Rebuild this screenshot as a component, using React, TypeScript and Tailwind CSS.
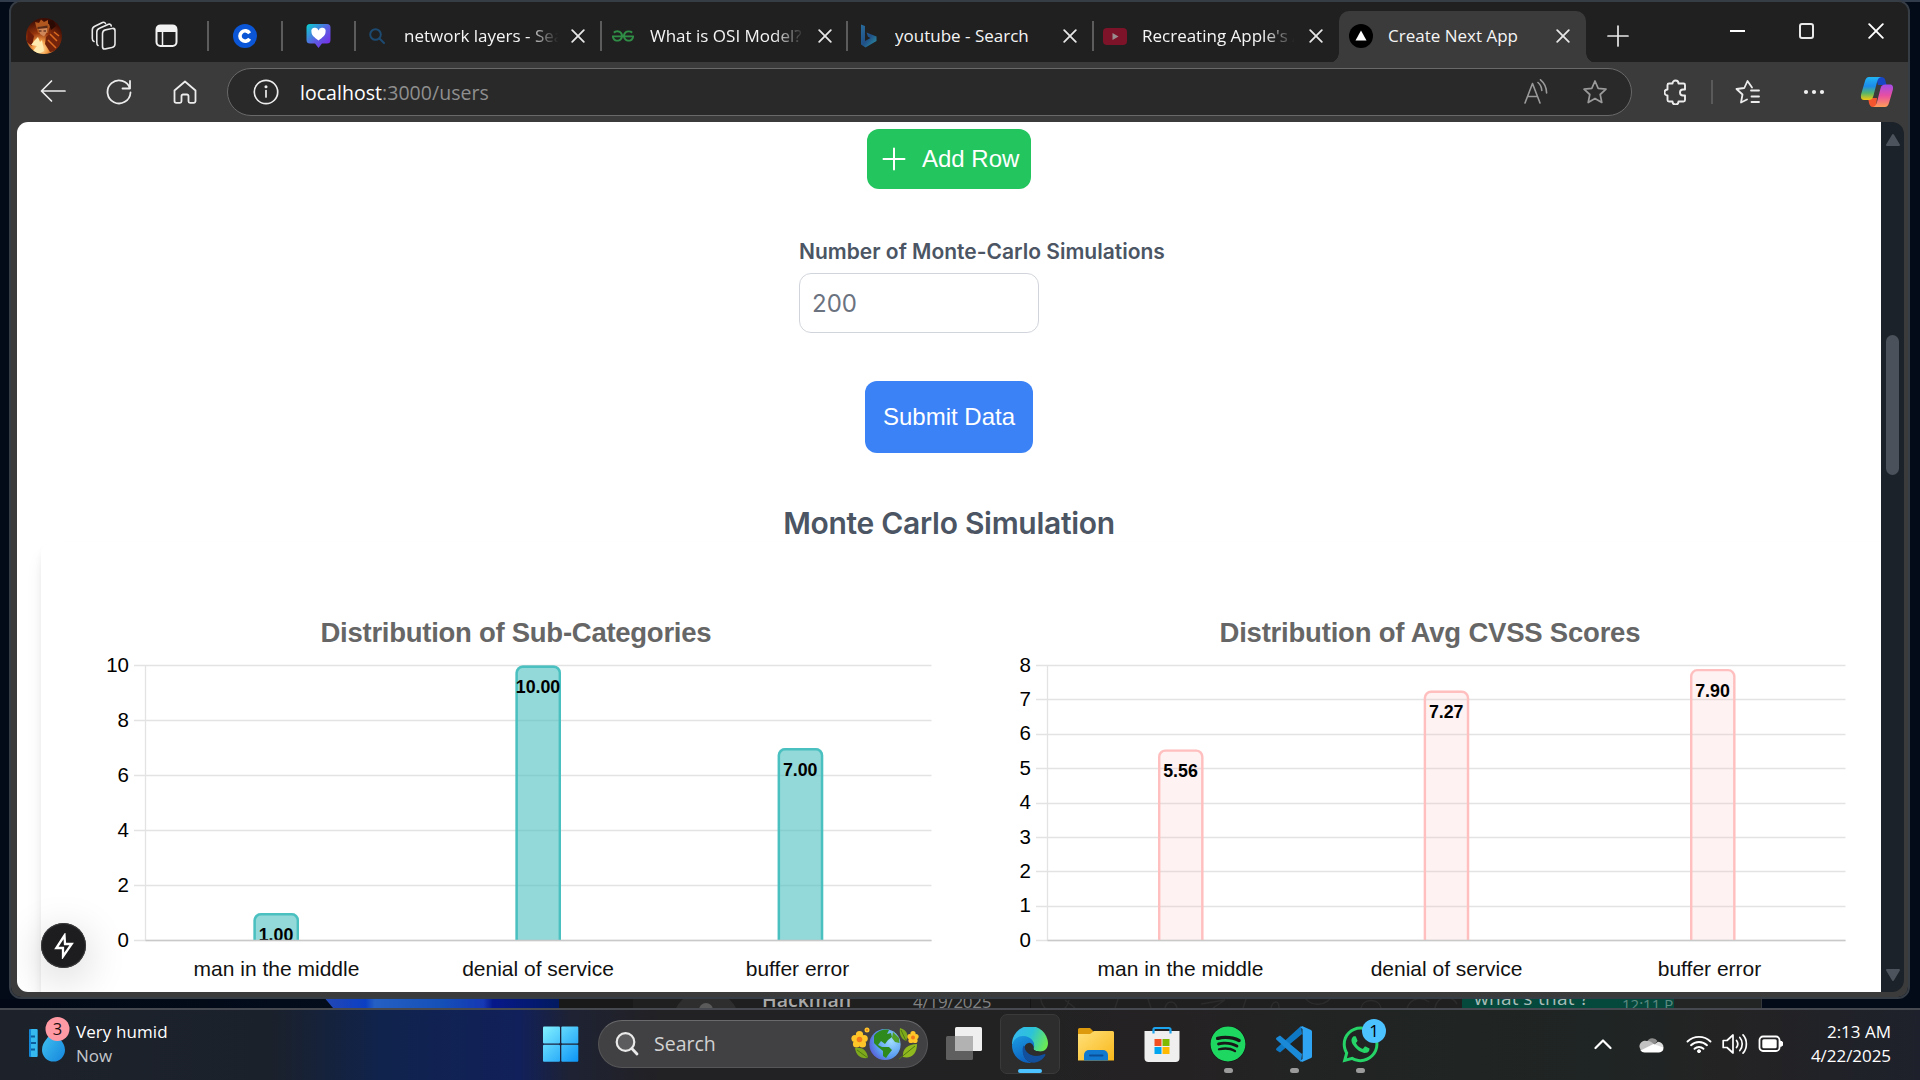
import React from "react";
import { FaSpotify, FaWhatsapp } from "react-icons/fa";
import { SiGeeksforgeeks } from "react-icons/si";

const segoe = "font-['Open_Sans','Noto_Sans',sans-serif]";

/* ---------- small shared pieces ---------- */

function Stroke({ w, h, box, sw = 1.6, className = "", children }: { w: number; h: number; box?: string; sw?: number; className?: string; children: React.ReactNode }) {
  return (
    <svg width={w} height={h} viewBox={box ?? `0 0 ${w} ${h}`} fill="none" stroke="currentColor" strokeWidth={sw} strokeLinecap="round" strokeLinejoin="round" className={`shrink-0 ${className}`}>
      {children}
    </svg>
  );
}

function TabClose() {
  return (
    <Stroke w={14} h={14} sw={1.8} className="text-[#e6e6e6]">
      <path d="M1.2 1.2L12.8 12.8M12.8 1.2L1.2 12.8" />
    </Stroke>
  );
}

function Divider() {
  return <div className="h-[30px] w-[2px] shrink-0 bg-[#5c5c5c]" />;
}

/* ---------- tab strip ---------- */

function Avatar() {
  return (
    <svg width="36" height="36" viewBox="0 0 36 36" className="shrink-0">
      <defs>
        <clipPath id="av"><circle cx="18" cy="18" r="18" /></clipPath>
        <radialGradient id="avg" cx=".4" cy=".85" r=".8">
          <stop offset="0" stopColor="#fff0c0" />
          <stop offset=".25" stopColor="#f5a04a" />
          <stop offset=".55" stopColor="#98350d" />
          <stop offset="1" stopColor="#3d0d04" />
        </radialGradient>
      </defs>
      <g clipPath="url(#av)">
        <rect width="36" height="36" fill="url(#avg)" />
        <path d="M10 8L9 4L13 5L15 1.500L18 4L22 2L22 6L25 6L23 11L22 15H12Z" fill="#b0561f" />
        <path d="M12 9L21 8V14L18 18.500L14 16Z" fill="#cf8658" />
        <path d="M11.500 9L21.500 7.500V10L11.500 11Z" fill="#5a2a16" />
        <path d="M13 13H15.500M17.500 13H20" stroke="#3a1208" strokeWidth="1.200" />
        <path d="M20 19L27 13L33 20L35 32L24 34L19 26Z" fill="#74240a" />
        <path d="M24 16L31 23M22 22L30 30M28 14L33 18" stroke="#d9691f" strokeWidth="1.600" />
        <path d="M2 12L8 18L6 28L1 24Z" fill="#6b1b07" />
        <path d="M22 3L27 2L30 8L25 12Z" fill="#2b0a04" />
        <path d="M9 22L12 19L14 24L16 22L18 33L12 36L7 33L11 28L5 27Z" fill="#ffeab0" />
      </g>
    </svg>
  );
}

function Tab({ icon, title, width, iconW, textW, fade }: { icon: React.ReactNode; title: string; width: string; iconW: string; textW: string; fade?: boolean }) {
  return (
    <div className={`flex h-[30px] shrink-0 items-center ${width}`}>
      <div className={`flex shrink-0 items-center ${iconW}`}>{icon}</div>
      <div className={`shrink-0 overflow-hidden whitespace-nowrap text-[17px] text-[#f5f5f5] ${textW} ${fade ? "[mask-image:linear-gradient(90deg,#000_79%,transparent_99%)]" : ""}`}>{title}</div>
      <TabClose />
    </div>
  );
}

function TabStrip() {
  return (
    <div className="flex h-[60px] shrink-0 bg-[#202020] pl-[16px]">
      <div className="flex h-[68px] w-full items-center">
        <Avatar />
        <Stroke w={26} h={30} className="ml-[29px] text-[#e8e8e8]">
          <rect x="11.500" y="8.500" width="12.500" height="19" rx="3" transform="skewY(-12) translate(0 3.500)" />
          <path d="M7 24.500C5.800 24 5.800 23 5.800 21.500V11C5.800 9 7 7.800 8.500 7.200L17.500 3.300C19 2.800 20 3.500 20.300 5M3 20.500C1.500 20 1.300 19 1.300 17.500V9C1.300 7 2.300 6 3.800 5.300L11.500 1.500C13 1 14 1.500 14.500 2.500" />
        </Stroke>
        <Stroke w={24} h={24} sw={2} className="ml-[38px] text-[#f2f2f2]">
          <rect x="1.500" y="1.500" width="20" height="20.500" rx="4" />
          <path d="M2 7V5a3 3 0 0 1 3-3h13a3 3 0 0 1 3 3v2z" fill="currentColor" />
          <path d="M7.500 8v14" strokeWidth="1.500" />
        </Stroke>
        <div className="ml-[28px]"><Divider /></div>
        <svg width="24" height="24" viewBox="0 0 24 24" className="ml-[24px] shrink-0">
          <circle cx="12" cy="12" r="12" fill="#0a56d6" />
          <path d="M16.600 9.300A5.200 5.200 0 1 0 16.600 14.700" fill="none" stroke="#fff" strokeWidth="3.600" />
        </svg>
        <div className="ml-[24px]"><Divider /></div>
        <svg width="25" height="26" viewBox="0 0 25 26" className="ml-[23px] shrink-0">
          <defs>
            <linearGradient id="hp" x1="0" y1="0" x2="1" y2="1">
              <stop offset="0" stopColor="#06d3cf" /><stop offset=".5" stopColor="#5a62e2" /><stop offset="1" stopColor="#7d1fe8" />
            </linearGradient>
          </defs>
          <path d="M4 1H21a3.500 3.500 0 0 1 3.500 3.500V17a3.500 3.500 0 0 1-3.500 3.500H16L12.500 25L9 20.500H4A3.500 3.500 0 0 1 .5 17V4.500A3.500 3.500 0 0 1 4 1Z" fill="url(#hp)" />
          <path d="M12.500 17.500C8 14 5.500 12 5.500 9.200A3.600 3.600 0 0 1 12.500 7.500A3.600 3.600 0 0 1 19.500 9.200C19.500 12 17 14 12.500 17.500Z" fill="#fff" />
        </svg>
        <div className="ml-[23px]"><Divider /></div>
        <Tab
          width="ml-[13px] w-[231px]" iconW="w-[35px]" textW="mr-[11px] w-[156px]" title="network layers - Search" fade
          icon={<Stroke w={16} h={16} sw={2} className="text-[#1c4a70]"><circle cx="6.500" cy="6.500" r="5.300" /><path d="M10.500 10.500L15 15" /></Stroke>}
        />
        <Divider />
        <Tab
          width="ml-[10px] w-[234px]" iconW="w-[38px]" textW="mr-[12px] w-[156px]" title="What is OSI Model? - Layers" fade
          icon={<SiGeeksforgeeks className="h-[22px] w-[22px] text-[#2f8d46]" />}
        />
        <Divider />
        <Tab
          width="ml-[12px] w-[232px]" iconW="w-[35px]" textW="mr-[13px] w-[155px]" title="youtube - Search"
          icon={
            <svg width="18" height="24" viewBox="0 0 18 24">
              <defs><linearGradient id="bg" x1="0" y1="0" x2=".8" y2="1"><stop offset="0" stopColor="#2a6c9c" /><stop offset=".6" stopColor="#1f4f86" /><stop offset="1" stopColor="#2c8aa0" /></linearGradient></defs>
              <path d="M1 0.500L5 2V17L10.500 14L8 12.800L6.500 8.500L16.500 12.500V17L5.500 23.500L1 20.500Z" fill="url(#bg)" />
            </svg>
          }
        />
        <Divider />
        <Tab
          width="ml-[9px] w-[236px]" iconW="w-[39px]" textW="mr-[13px] w-[154px]" title="Recreating Apple's Animation" fade
          icon={<svg width="24" height="17" viewBox="0 0 24 17"><rect width="24" height="17" rx="4" fill="#7d1329" /><path d="M9.500 5V12L15.500 8.500Z" fill="#9a8d90" /></svg>}
        />
        <div className="relative mt-[2px] flex h-[52px] w-[247px] shrink-0 items-center rounded-t-[10px] bg-[#3b3b3b] pl-[10px]">
          <div className="absolute -left-[10px] bottom-0 h-[10px] w-[10px] bg-[radial-gradient(circle_at_0_0,transparent_9.500px,#3b3b3b_10px)]" />
          <div className="absolute -right-[10px] bottom-0 h-[10px] w-[10px] bg-[radial-gradient(circle_at_100%_0,transparent_9.500px,#3b3b3b_10px)]" />
          <Tab
            width="w-[230px] -mt-[2px]" iconW="w-[39px]" textW="mr-[11px] w-[157px]" title="Create Next App"
            icon={<svg width="24" height="24" viewBox="0 0 24 24"><circle cx="12" cy="12" r="12" fill="#000" /><path d="M12 6.500L17.500 16.500H6.500Z" fill="#fff" /></svg>}
          />
        </div>
        <Stroke w={22} h={22} sw={1.700} className="ml-[21px] text-[#e8e8e8]"><path d="M11 1V21M1 11H21" /></Stroke>
        <div className="-mt-[10px] flex items-center text-white">
          <div className="ml-[101px] h-[2px] w-[15px] bg-white" />
          <div className="ml-[54px] h-[16px] w-[15px] rounded-[3px] border-2 border-[#e8e8e8]" />
          <Stroke w={16} h={16} sw={1.900} className="ml-[54px]"><path d="M1.200 1.200L14.800 14.800M14.800 1.200L1.200 14.800" /></Stroke>
        </div>
      </div>
    </div>
  );
}

/* ---------- toolbar ---------- */

function Copilot() {
  return (
    <svg width="34" height="32" viewBox="0 0 34 32" className="shrink-0">
      <defs>
        <linearGradient id="cpA" x1="0" y1="0" x2="0" y2="1"><stop offset="0" stopColor="#22b4f4" /><stop offset=".4" stopColor="#1c8bea" /><stop offset=".7" stopColor="#57b56a" /><stop offset="1" stopColor="#f6c90e" /></linearGradient>
        <linearGradient id="cpB" x1="0" y1="0" x2="0" y2="1"><stop offset="0" stopColor="#a34be8" /><stop offset=".5" stopColor="#e84fa0" /><stop offset="1" stopColor="#ff9d57" /></linearGradient>
      </defs>
      <path d="M16 1H21C24 1 25 3 25.500 5L26.500 9H18Z" fill="#1747c4" />
      <path d="M8 22H17L16 31H13C10.500 31 9.500 29 9 27Z" fill="#f4552f" />
      <path d="M9 1H21C18.500 1.500 17.800 3.500 17 6L13.500 19.500C12.800 22.500 11.500 24 8.500 24H4C1 24 .5 21 1.200 18L5 5C5.800 2.500 7 1 9 1Z" fill="url(#cpA)" />
      <path d="M25 31H13C15.500 30.500 16.200 28.500 17 26L20.500 12.500C21.200 9.500 22.500 8.500 25.500 8.500H30C33 8.500 33.500 11 32.800 14L29 27C28.200 29.500 27 31 25 31Z" fill="url(#cpB)" />
    </svg>
  );
}

function Toolbar() {
  return (
    <div className="flex h-[60px] shrink-0 items-center bg-[#3b3b3b] pl-[30px] text-[#ececec]">
      <Stroke w={26} h={24} sw={1.700} className="-mt-[2px]"><path d="M25 12H2M11.500 2L1.500 12L11.500 22" /></Stroke>
      <Stroke w={26} h={26} sw={1.800} className="ml-[40px]"><path d="M24 9.500A11.500 11.500 0 1 0 24.500 13.500M24 2V9.500H16.500" /></Stroke>
      <Stroke w={24} h={24} sw={1.800} className="ml-[41px]"><path d="M1.500 10.500L12 1.500L22.500 10.500V21A1.800 1.800 0 0 1 20.700 22.800H17A1.500 1.500 0 0 1 15.500 21.300V16A1.500 1.500 0 0 0 14 14.500H10A1.500 1.500 0 0 0 8.500 16V21.300A1.500 1.500 0 0 1 7 22.800H3.300A1.800 1.800 0 0 1 1.500 21Z" /></Stroke>
      <div className="ml-[30px] flex h-[48px] w-[1405px] shrink-0 items-center rounded-full border-[1.500px] border-[#696969] bg-[#292929] pl-[25px] pr-[22px]">
        <Stroke w={26} h={26} sw={1.700}><circle cx="13" cy="13" r="11.700" /><path d="M13 11.500V18" /><circle cx="13" cy="7.700" r=".7" fill="currentColor" /></Stroke>
        <div className="ml-[21px] mt-[1px] flex-1 text-[19.500px] tracking-[0.04px] text-[#8f8f8f]"><span className="text-white">localhost</span>:3000/users</div>
        <Stroke w={26} h={26} sw={1.600} className="text-[#9a9a9a]"><path d="M2 24L9.500 4.500L17 24M4.500 17.500H14.500M15 3.500C17.500 5.500 18.600 8 18.800 11.500M17.500 .8C21.500 4 23.500 8 23.600 14" /></Stroke>
        <Stroke w={26} h={26} sw={1.700} className="ml-[33px] mr-px text-[#9a9a9a]"><path d="M13 2L16.200 9.300L24 10.200L18.200 15.500L19.800 23.500L13 19.500L6.200 23.500L7.800 15.500L2 10.200L9.800 9.300Z" /></Stroke>
      </div>
      <Stroke w={24} h={26} sw={1.900} className="ml-[32px]"><path d="M8.500 4.500a3 3 0 0 1 6 0H19.500A1.500 1.500 0 0 1 21 6V10.500H19a2.800 2.800 0 0 0 0 6h2V21a1.500 1.500 0 0 1-1.500 1.500H14.500a3 3 0 0 1-6 0H5A1.500 1.500 0 0 1 3.500 21V16.500a3 3 0 0 1 0-6V6A1.500 1.500 0 0 1 5 4.500Z" /></Stroke>
      <div className="ml-[23px] h-[24px] w-[2px] bg-[#5a5a5a]" />
      <Stroke w={26} h={26} sw={1.800} className="ml-[22px]"><path d="M17 8.500L12.500 2L9.300 9L1.500 10L7.500 15.500L6 23.500L12 20.500M16 11.500H24M16.500 17.500H24M16.500 23H24" /></Stroke>
      <svg width="22" height="6" viewBox="0 0 22 6" className="ml-[42px] shrink-0"><g fill="#f0f0f0"><circle cx="3" cy="3" r="2.100" /><circle cx="11" cy="3" r="2.100" /><circle cx="19" cy="3" r="2.100" /></g></svg>
      <div className="ml-[35px]"><Copilot /></div>
    </div>
  );
}

/* ---------- charts ---------- */

type Bar = { label: string; value: number; lx: number };

function BarChart({ title, width, axisX, gridX, right, max, step, bars, fill, line, barX, titleX, titleW }: {
  title: string; width: number; axisX: number; gridX: number; right: number; max: number; step: number; bars: Bar[]; fill: string; line: string; barX: number[]; titleX: number; titleW: number;
}) {
  const top = 66.5;
  const bottom = 341.5;
  const y = (v: number) => bottom - (v / max) * (bottom - top);
  const ticks: number[] = [];
  for (let v = 0; v <= max; v += step) ticks.push(v);
  return (
    <svg width={width} height="393" viewBox={`0 0 ${width} 393`} className="shrink-0 font-['Liberation_Sans',Arial,sans-serif]">
      <text x={titleX} y="43" textLength={titleW} fontSize="27.500" fontWeight="700" fill="#666">{title}</text>
      {ticks.map((v) => (
        <g key={v}>
          <path d={`M${gridX} ${Math.round(y(v) - 0.5) + 0.5}H${right}`} stroke="#e3e3e3" strokeWidth="1.300" />
          <text x={gridX - 5} y={y(v) + 6.200} textAnchor="end" fontSize="20.500" fill="#000">{v}</text>
        </g>
      ))}
      <path d={`M${axisX} ${top}V${bottom}`} stroke="#e3e3e3" strokeWidth="1.300" />
      {bars.map((b, i) => {
        const x = barX[i];
        const t = y(b.value);
        return (
          <g key={b.label}>
            <path d={`M${x} ${bottom}V${t + 7}a7 7 0 0 1 7 -7H${x + 38.5}a7 7 0 0 1 7 7V${bottom}Z`} fill={fill} />
            <path d={`M${x + 1.2} ${bottom}V${t + 7.5}a6.300 6.300 0 0 1 6.300 -6.300H${x + 38}a6.300 6.300 0 0 1 6.300 6.300V${bottom}`} fill="none" stroke={line} strokeWidth="2.400" />
            <text x={x + 22.500} y={t + 27.700} textAnchor="middle" fontSize="17.800" fontWeight="700" fill="#000">{b.value.toFixed(2)}</text>
            <text x={b.lx} y="377" textAnchor="middle" fontSize="21" fill="#111">{b.label}</text>
          </g>
        );
      })}
      <path d={`M${axisX} ${bottom}H${right}`} stroke="#c9c9c9" strokeWidth="1.500" />
    </svg>
  );
}

/* ---------- page ---------- */

function Page() {
  return (
    <div className="relative flex h-full w-[1864px] shrink-0 flex-col items-center overflow-hidden rounded-l-[11px] bg-white font-['Inter',sans-serif]">
      <button className="mt-[7px] flex h-[60px] w-[164px] shrink-0 items-center rounded-xl bg-[#22c55e] pl-[15px] font-['Liberation_Sans',Arial,sans-serif] text-[24px] text-white">
        <Stroke w={24} h={24} sw={2} className="mr-[16px]"><path d="M12 1.500V22.500M1.500 12H22.500" /></Stroke>
        <span className="whitespace-nowrap">Add Row</span>
      </button>
      <div className="mt-[47px] flex w-[300px] shrink-0 flex-col">
        <label className="h-[32px] whitespace-nowrap text-[21px] font-semibold leading-[32px] text-[#4b5563]">Number of Monte-Carlo Simulations</label>
        <div className="mt-[5px] flex h-[60px] w-[240px] items-center rounded-xl border border-[#d1d5db] px-[12px] pt-[2px] text-[24px] text-[#6b7280]">200</div>
      </div>
      <button className="mt-[48px] h-[72px] w-[168px] shrink-0 whitespace-nowrap rounded-xl bg-[#3b82f6] font-['Liberation_Sans',Arial,sans-serif] text-[24px] text-white">Submit Data</button>
      <h2 className="mt-[50px] h-[39px] shrink-0 text-[30px] font-semibold leading-[40px] tracking-[-0.300px] text-[#4b5563]">Monte Carlo Simulation</h2>
      <div className="flex h-[520px] w-full shrink-0 pl-[24px]">
        <div className="flex h-full w-[1860px] shrink-0 rounded-xl bg-white pt-[57px] shadow-[0_12px_19px_-4px_rgba(0,0,0,0.1),0_5px_8px_-2px_rgba(0,0,0,0.08)]">
          <BarChart
            title="Distribution of Sub-Categories" width={920} gridX={93} axisX={104.500} right={890.500} max={10} step={2}
            fill="rgba(75,192,192,0.6)" line="#4bc0c0" barX={[212.500, 474.500, 736.700]} titleX={279.500} titleW={391}
            bars={[{ label: "man in the middle", value: 1, lx: 235.500 }, { label: "denial of service", value: 10, lx: 497 }, { label: "buffer error", value: 7, lx: 756.500 }]}
          />
          <BarChart
            title="Distribution of Avg CVSS Scores" width={920} gridX={75} axisX={86.500} right={884.500} max={8} step={1}
            fill="rgba(255,190,190,0.2)" line="#ffbfbf" barX={[197, 462.700, 729]} titleX={258.500} titleW={421}
            bars={[{ label: "man in the middle", value: 5.56, lx: 219.500 }, { label: "denial of service", value: 7.27, lx: 485.500 }, { label: "buffer error", value: 7.9, lx: 748.500 }]}
          />
        </div>
      </div>
      <div className="absolute left-[24px] top-[801px] flex h-[45px] w-[45px] items-center justify-center rounded-full bg-[#1d1d1f] text-white shadow-[0_0_0_1px_#3a3a3c_inset,0_10px_44px_rgba(0,0,0,0.2)]">
        <Stroke w={20} h={26} sw={2.300}><path d="M10.500 2.500L2.300 15H9V23.500L17.700 11H11Z" strokeLinejoin="miter" /></Stroke>
      </div>
    </div>
  );
}

function Scrollbar() {
  return (
    <div className="flex w-[23px] shrink-0 flex-col items-center rounded-r-[12px] bg-[#1c2229]">
      <svg width="16" height="14" viewBox="0 0 16 14" className="mt-[11px]"><path d="M8 2L14 12H2Z" fill="#4d535c" stroke="#4d535c" strokeWidth="2" strokeLinejoin="round" /></svg>
      <div className="mt-[188px] h-[140px] w-[13px] rounded-full bg-[#4b515a]" />
      <svg width="16" height="14" viewBox="0 0 16 14" className="mb-[10px] mt-auto"><path d="M8 12L14 2H2Z" fill="#4d535c" stroke="#4d535c" strokeWidth="2" strokeLinejoin="round" /></svg>
    </div>
  );
}

/* ---------- desktop behind the browser ---------- */

function ChatWindow() {
  return (
    <div className="absolute left-[559px] top-[980px] flex h-[28px] w-[1203px] items-end overflow-hidden border-r border-[#34383a] bg-[#1f1f1f] text-[#a9a9a9]">
      <div className="relative flex h-full w-[472px] shrink-0 border-r border-[#151515]">
        <div className="h-full w-[74px] bg-[#191919]" />
        <div className="mt-[10px] h-[68px] w-[68px] translate-x-[39px] rounded-full bg-[#2e2e2e]">
          <div className="mx-auto mt-[13px] h-[14px] w-[14px] rounded-full bg-[#5a5a5a]" />
        </div>
        <span className="absolute left-[203px] top-[7px] text-[19.500px] font-semibold leading-[26px]">Hackman</span>
        <span className="absolute left-[354px] top-[10px] text-[17px] leading-[24px] tracking-[-0.250px] text-[#828282]">4/19/2025</span>
      </div>
      <svg width="431" height="28" viewBox="0 0 431 28" className="shrink-0" fill="none" stroke="#2b2b2b" strokeWidth="1.500">
        <path d="M10 16a14 14 0 0 0 28 4M34 20l10 8M84 28l4-12M120 28l-4-12M134 28c2-8 10-8 12 0M170 24l24-4-12 8M212 28l4-12M240 28c2-8 8-8 8 0M272 14c6 14 24 14 32-2M330 28c2-10 18-10 20 0M376 28c4-10 14-12 22-6M404 28c2-12 16-14 22-4" />
      </svg>
      <div className="relative h-full w-[212px] shrink-0 overflow-hidden bg-[#05493d]">
        <span className="absolute left-[12px] top-[5px] whitespace-nowrap text-[19px] leading-[26px] tracking-[0.300px] text-[#a8bdb8]">what's that ?</span>
        <span className="absolute left-[160px] top-[14px] whitespace-nowrap text-[15px] leading-[20px] text-[#5c8b82]">12:11 PM</span>
      </div>
      <div className="h-full flex-1 bg-[#222524]" />
    </div>
  );
}

/* ---------- taskbar ---------- */

function Pinned({ children, dot, active, badge }: { children: React.ReactNode; dot?: boolean; active?: boolean; badge?: string }) {
  return (
    <div className={`relative flex h-[60px] w-[60px] shrink-0 flex-col items-center rounded-[7px] pt-[12px] ${active ? "border border-[#3a3a3a] bg-[#2d2d2e] pt-[11px]" : ""}`}>
      <div className="flex h-[36px] w-[36px] items-center justify-center">{children}</div>
      {active && <div className="mt-[6px] h-[5px] w-[24px] rounded-full bg-[#4cc2ff]" />}
      {dot && <div className="mt-[6px] h-[5px] w-[9px] rounded-full bg-[#9b9b9b]" />}
      {badge && <div className="absolute right-[4px] top-[5px] flex h-[24px] w-[24px] items-center justify-center rounded-full bg-[#4cc2ff] text-[17px] text-black">{badge}</div>}
    </div>
  );
}

function EdgeIcon() {
  return (
    <svg width="36" height="36" viewBox="0 0 36 36">
      <defs>
        <linearGradient id="e1" x1="0" y1=".3" x2="1" y2=".6"><stop offset="0" stopColor="#35b8f0" /><stop offset=".5" stopColor="#2cc3d8" /><stop offset="1" stopColor="#6bea52" /></linearGradient>
        <linearGradient id="e2" x1="0" y1="0" x2=".4" y2="1"><stop offset="0" stopColor="#1b9de2" /><stop offset="1" stopColor="#0d62c0" /></linearGradient>
      </defs>
      <path d="M0 18A18 18 0 0 1 36 16C36 21 33 24.500 27.500 24.500C24 24.500 21 23 21.500 21.500C23 19 22 14 17 12C11 9.500 4 11 0 18Z" fill="url(#e1)" />
      <path d="M0 18C2 10 10 7 17 10.500C22 13 23 18 21.500 21C20 17.500 13 17 11.500 23C10.500 29 14 34 20 35.900C9 37 0 29 0 18Z" fill="url(#e2)" />
      <path d="M11.500 18.500C8.500 26 13 35 21 35.700C27 35.500 31.500 32 33.500 28C33.500 26.500 32 27 31 27.500C23 31 14 27.500 13.500 20Z" fill="#124f9c" />
      <path d="M21.500 21.500A4.500 4.500 0 1 0 13.200 22.500C14.500 25.500 18 28 22.500 28.500C25 28.600 28 28.200 30 27.500L27.500 24.500C24 24.500 21 23 21.500 21.500Z" fill="#2d2d2e" />
    </svg>
  );
}

function SearchArt() {
  return (
    <svg width="68" height="34" viewBox="0 0 68 34" className="shrink-0">
      <defs><radialGradient id="gl" cx=".7" cy=".4" r=".8"><stop offset="0" stopColor="#9fdcff" /><stop offset=".6" stopColor="#5a9df0" /><stop offset="1" stopColor="#5a4fd0" /></radialGradient></defs>
      <g fill="#ffc629">
        <circle cx="8.500" cy="7.500" r="3.600" /><circle cx="13.200" cy="11.500" r="3.600" /><circle cx="11.500" cy="17" r="3.600" /><circle cx="5.500" cy="17" r="3.600" /><circle cx="4" cy="11.500" r="3.600" />
        <circle cx="16" cy="3" r="2.500" />
        <circle cx="62" cy="6.500" r="2.600" /><circle cx="65" cy="9.500" r="2.600" /><circle cx="64" cy="13.500" r="2.600" /><circle cx="60" cy="13.500" r="2.600" /><circle cx="58.800" cy="9.500" r="2.600" />
      </g>
      <circle cx="8.500" cy="12.500" r="2.800" fill="#f07a1c" /><circle cx="16" cy="3" r="1" fill="#f07a1c" /><circle cx="62" cy="10.500" r="2" fill="#f07a1c" />
      <path d="M4 21C11 20 16 23 17 31C9 32 5 28 4 21Z" fill="#7fa91c" /><path d="M6 23L17 31" stroke="#4f7a10" />
      <path d="M49 1C56 3 58 8 55 14C50 12 48 7 49 1Z" fill="#7fa91c" /><path d="M50 3L55 14" stroke="#4f7a10" />
      <path d="M66 17C57 17 51 22 52 30C61 32 66 26 66 17Z" fill="#8fb91e" /><path d="M48 32L64 19" stroke="#4f7a10" />
      <circle cx="34" cy="17.500" r="15.600" fill="url(#gl)" />
      <path d="M23 9C26 4 33 1.500 38 3L36 7L40 6L41 10L37 13L34 17L30 14L27 18L31 20L38 20L41 23L37 28L35 31L32 29L32 24L27 20L23 16Z" fill="#2f8a1e" />
      <path d="M42 5L48 11L48.500 16L44 15L41 11Z" fill="#4f9c28" />
    </svg>
  );
}

function Taskbar() {
  return (
    <div className="absolute bottom-0 left-0 flex h-[72px] w-full items-center border-t-2 border-[#464a50] bg-[linear-gradient(90deg,#1d222a_0px,#1b212b_270px,#10234c_380px,#11205a_520px,#1e2233_570px,#222124_660px,#222223_1000px,#252224_1180px,#212423_1350px,#1f2524_1600px,#242324_1730px,#1e212b_1920px)] pb-[2px]">
      <div className="flex h-full w-[543px] shrink-0 items-center pl-[28px]">
        <svg width="46" height="54" viewBox="0 0 46 54" className="-mt-[2px] shrink-0">
          <defs><linearGradient id="dr" x1="0" y1="0" x2="1" y2="1"><stop offset="0" stopColor="#45c8f2" /><stop offset="1" stopColor="#1585dc" /></linearGradient></defs>
          <rect x="1" y="13" width="8.500" height="28" rx="1" fill="#1287d8" /><rect x="3" y="13" width="6.500" height="28" rx="1" fill="#35b9ef" />
          <path d="M3 20.500h4M3 27h5M3 33.500h4" stroke="#0d5c9c" strokeWidth="1.800" />
          <path d="M25 13C28 21 37 25 37 34A11.500 11.500 0 0 1 14 34C14 25 22 21 25 13Z" fill="url(#dr)" />
          <circle cx="29.500" cy="13" r="12" fill="#ff99a4" />
          <text x="29.500" y="19" textAnchor="middle" fontSize="16.500" fill="#1a1010" fontFamily="'Open Sans'">3</text>
        </svg>
        <div className="ml-[2px] -mt-[1px] text-[17px] leading-[24px] text-white">
          <div className="tracking-[0.080px]">Very humid</div>
          <div className="text-[#c3c6cb]">Now</div>
        </div>
      </div>
      <svg width="36" height="36" viewBox="0 0 36 36" className="shrink-0">
        <defs><linearGradient id="wi" gradientUnits="userSpaceOnUse" x1="0" y1="0" x2="36" y2="36"><stop offset="0" stopColor="#84f2ff" /><stop offset="1" stopColor="#0a93f7" /></linearGradient></defs>
        <g fill="url(#wi)"><rect x="0" y="0.500" width="17" height="17" rx="1" /><rect x="18.300" y="0.500" width="17" height="17" rx="1" /><rect x="0" y="18.700" width="17" height="17" rx="1" /><rect x="18.300" y="18.700" width="17" height="17" rx="1" /></g>
      </svg>
      <div className="ml-[19px] flex h-[48px] w-[330px] shrink-0 items-center rounded-full border border-[#565658] border-t-[#6a6a6c] bg-[#414143] pl-[16px] pr-[8px]">
        <Stroke w={24} h={24} sw={2.200} className="text-[#eaeaea]"><circle cx="10.500" cy="10" r="8.800" fill="#5c5c5e" /><path d="M16.800 16.500L22 22" strokeWidth="2.800" /></Stroke>
        <span className="ml-[15px] flex-1 text-[19.500px] text-[#d2d2d2]">Search</span>
        <SearchArt />
      </div>
      <svg width="38" height="36" viewBox="0 0 38 36" className="ml-[17px] shrink-0">
        <rect x="10" y="1" width="27" height="24" rx="1.500" fill="#efefef" />
        <rect x="1" y="10" width="27" height="24" rx="1.500" fill="#5f5f5f" />
        <path d="M10 10H28V25H10Z" fill="#b2b2b2" />
      </svg>
      <div className="ml-[17px] flex gap-[6px]">
        <Pinned active><EdgeIcon /></Pinned>
        <Pinned>
          <svg width="36" height="36" viewBox="0 0 36 36">
            <defs><linearGradient id="fo" x1="0" y1="0" x2="1" y2="1"><stop offset="0" stopColor="#ffe07a" /><stop offset="1" stopColor="#f9b81a" /></linearGradient></defs>
            <path d="M0 3.500A1.500 1.500 0 0 1 1.500 2H12L16 6H34V16H0Z" fill="#dc9a0c" />
            <path d="M0 8H12L16 5H34.500A1.500 1.500 0 0 1 36 6.500V34.500H0Z" fill="url(#fo)" />
            <path d="M6 34.500V29A5 5 0 0 1 11 24H25A5 5 0 0 1 30 29V34.500Z" fill="#1279d0" />
            <path d="M12 29.500H24.500" stroke="#0b4f98" strokeWidth="2" strokeLinecap="round" />
          </svg>
        </Pinned>
        <Pinned>
          <svg width="36" height="36" viewBox="0 0 36 36">
            <path d="M9.500 8V3.500A1.500 1.500 0 0 1 11 2H25A1.500 1.500 0 0 1 26.500 3.500V8" fill="none" stroke="#1da4ee" strokeWidth="2.200" />
            <path d="M.5 5H35.500V32A4 4 0 0 1 31.500 36H4.500A4 4 0 0 1 .5 32Z" fill="#efefef" />
            <path d="M9.500 5V7.500M26.500 5V7.500" stroke="#1da4ee" strokeWidth="2.200" />
            <path d="M10.500 13h7v7h-7z" fill="#f25022" /><path d="M18.500 13h7v7h-7z" fill="#7fba00" /><path d="M10.500 21h7v7h-7z" fill="#00a4ef" /><path d="M18.500 21h7v7h-7z" fill="#ffb900" />
          </svg>
        </Pinned>
        <Pinned dot><FaSpotify className="h-[36px] w-[36px] rounded-full bg-[#181818] text-[#1ed760]" /></Pinned>
        <Pinned dot>
          <svg width="36" height="36" viewBox="0 0 36 36">
            <path d="M26 8L4 26.500L.8 24.500C-.2 23.800-.2 22.800.8 22L25 0Z" fill="#0f78c4" />
            <path d="M26 28L4 9.500L.8 11.500C-.2 12.200-.2 13.200.8 14L25 36Z" fill="#1a8ad8" />
            <path d="M26 0L35 4A1.800 1.800 0 0 1 36 5.600V30.400A1.800 1.800 0 0 1 35 32L26 36L24.500 34.500L26.500 33V3L24.500 1.500Z" fill="#2fa4f2" />
            <path d="M26.500 8.500V27.500L14.500 18Z" fill="#212122" />
          </svg>
        </Pinned>
        <Pinned dot badge="1"><FaWhatsapp className="h-[41px] w-[41px] shrink-0 text-[#25d366]" /></Pinned>
      </div>
      <div className="ml-auto flex items-center pr-[29px] text-white">
        <Stroke w={18} h={12} sw={2.200}><path d="M1.500 10L9 2.500L16.500 10" /></Stroke>
        <svg width="25" height="17" viewBox="0 0 25 17" className="ml-[27px] shrink-0">
          <path d="M8 5.500A6 6 0 0 1 18.500 5L14 9.500Z" fill="#8d8d8d" /><path d="M8 5A5.700 5.700 0 0 0 .5 11L2 15L15 8.500C13 6 10.500 4.500 8 5Z" fill="#c2c2c2" />
          <path d="M15 8.500L19 5.800A5.500 5.500 0 0 1 24.500 11.500L22 12.500Z" fill="#dcdcdc" /><path d="M1.500 14.500L14.500 8L24.500 11.500A5 5 0 0 1 20 16.500H5.500A5 5 0 0 1 1.500 14.500Z" fill="#fff" />
        </svg>
        <svg width="26" height="19" viewBox="0 0 26 19" className="ml-[22px] shrink-0" fill="none" stroke="#fff" strokeWidth="1.900" strokeLinecap="round">
          <path d="M1.500 6.500A16.500 16.500 0 0 1 24.500 6.500M5 10.200A11.500 11.500 0 0 1 21 10.200M8.500 13.800A6.500 6.500 0 0 1 17.500 13.800" /><circle cx="13" cy="16.200" r="1.500" fill="#fff" strokeWidth="1" />
        </svg>
        <Stroke w={26} h={22} sw={1.700} className="ml-[10px]"><path d="M1.200 7.500H5L11 2V20L5 14.500H1.200ZM14.500 7.500C16 9.500 16 12.500 14.500 14.500M17.800 4.500C21 8 21 14 17.800 17.500M21 1.800C25.500 6.500 25.500 15.500 21 20.200" /></Stroke>
        <svg width="26" height="18" viewBox="0 0 26 18" className="ml-[10px] shrink-0"><rect x="1.500" y="1.500" width="20" height="14.500" rx="3.500" fill="none" stroke="#fff" strokeWidth="1.800" /><rect x="4.300" y="4.300" width="14.400" height="9" rx="1.500" fill="#fff" /><path d="M22.500 6V11.500L24.500 10.500V7Z" fill="#fff" stroke="#fff" /></svg>
        <div className="-mt-[1px] ml-[23px] w-[84px] whitespace-nowrap text-right text-[17px] leading-[24px]">
          <div>2:13 AM</div>
          <div className="tracking-[-0.050px]">4/22/2025</div>
        </div>
      </div>
    </div>
  );
}

export default function App() {
  return (
    <div className={`relative h-[1080px] w-[1920px] overflow-hidden bg-[#030a18] ${segoe}`}>
      <div className="absolute inset-x-0 top-0 h-[2px] bg-[#303b4b]" />
      <div className="absolute left-0 top-[999px] h-[9px] w-[559px] bg-[linear-gradient(90deg,#020815,#041020)]" />
      <svg width="236" height="12" viewBox="0 0 236 12" className="absolute left-[323px] top-[996px]">
        <defs><linearGradient id="wl" x1="0" x2="1"><stop offset="0" stopColor="#2548b4" /><stop offset=".18" stopColor="#0b3fc4" /><stop offset=".22" stopColor="#2560c4" /><stop offset=".5" stopColor="#1450b8" /><stop offset=".68" stopColor="#1638b4" /><stop offset=".72" stopColor="#06188a" /><stop offset="1" stopColor="#021a60" /></linearGradient></defs>
        <path d="M0 0H236V12H10Z" fill="url(#wl)" />
      </svg>
      <ChatWindow />
      <div className="absolute left-[9px] top-0 flex h-[999px] w-[1901px] flex-col overflow-hidden rounded-[12px] border-x-[2px] border-b-[2px] border-t-[2px] border-[#373d45] bg-[#3b3b3b] bg-clip-padding">
        <div className="-ml-px flex min-h-0 flex-1 flex-col">
          <TabStrip />
          <Toolbar />
          <div className="flex h-[870px] shrink-0 pl-[7px]">
            <Page />
            <Scrollbar />
          </div>
        </div>
      </div>
      <Taskbar />
    </div>
  );
}
